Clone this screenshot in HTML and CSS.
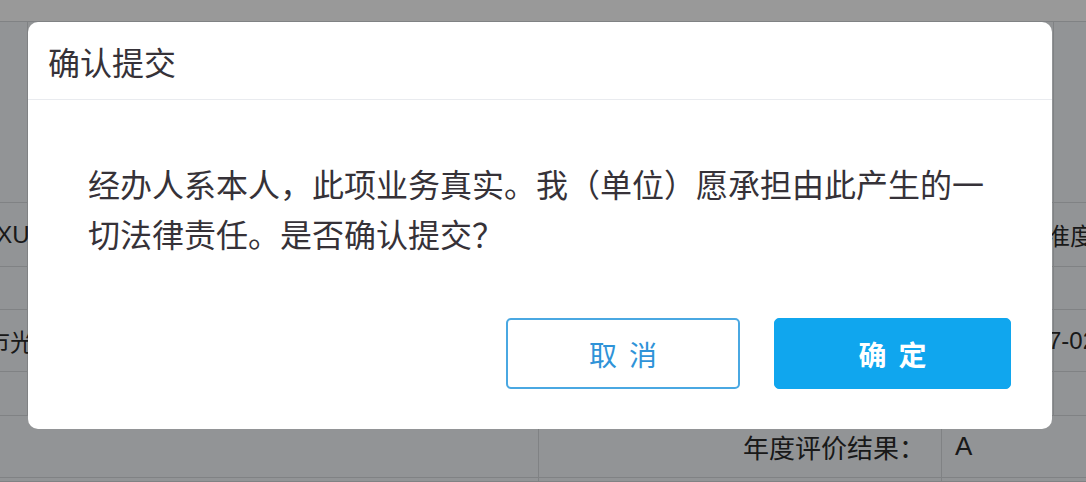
FILE: index.html
```html
<!DOCTYPE html>
<html lang="zh-CN">
<head>
<meta charset="utf-8">
<title>确认提交</title>
<link rel="stylesheet" href="styles.css">
</head>
<body>
  <div class="page">
    <div class="topbar"></div>
    <div class="form">
      <div class="cell c1"></div><div class="cell mid"></div><div class="cell c5"></div>
      <div class="cell c1"><span class="text shift-left">nXUN</span></div><div class="cell mid"></div><div class="cell c5"><span class="text shift-right">准度</span></div>
      <div class="cell c1"></div><div class="cell mid"></div><div class="cell c5"></div>
      <div class="cell c1"><span class="text shift-left2">市光</span></div><div class="cell mid"></div><div class="cell c5"><span class="text shift-right2">7-02</span></div>
      <div class="cell c1"></div><div class="cell mid"></div><div class="cell c5"></div>
      <div class="cell wide"></div><div class="cell label">年度评价结果：</div><div class="cell value">A</div>
      <div class="cell wide"></div><div class="cell label"></div><div class="cell value"></div>
    </div>
  </div>

  <div class="mask">
    <div class="dialog">
      <div class="dialog-header">
        <h2 class="dialog-title">确认提交</h2>
      </div>
      <div class="dialog-body">
        <p>经办人系本人，此项业务真实。我（单位）愿承担由此产生的一切法律责任。是否确认提交？</p>
      </div>
      <div class="dialog-footer">
        <button class="btn btn-cancel">取消</button>
        <button class="btn btn-primary">确定</button>
      </div>
    </div>
  </div>
</body>
</html>
```

FILE: styles.css
```css
* { box-sizing: border-box; }

html, body {
  margin: 0;
  padding: 0;
  width: 1086px;
  height: 482px;
  overflow: hidden;
}

body {
  font-family: "Noto Sans CJK SC", "Liberation Sans", sans-serif;
  background: #f4f7fa;
  color: #333;
}

.page {
  width: 1086px;
  height: 482px;
  overflow: hidden;
}

.topbar {
  height: 22px;
  background: #ffffff;
  border-bottom: 1px solid #d6d9dd;
}

.form {
  display: grid;
  grid-template-columns: 28px 511px 403px 112px 1fr;
  grid-template-rows: 181px 64px 43px 62px 44px 62px 4px;
}

.cell {
  border-right: 1px solid #d6d9dd;
  border-bottom: 1px solid #d6d9dd;
  display: flex;
  align-items: center;
  font-family: "Liberation Sans", "Noto Sans CJK SC", sans-serif;
  font-size: 24px;
  color: #2b2b2b;
  white-space: nowrap;
}

.c1 { grid-column: 1; }
.mid { grid-column: 2 / span 3; }
.c5 { grid-column: 5; border-right: none; }
.wide { grid-column: 1 / span 2; }
.label {
  grid-column: 3;
  justify-content: flex-end;
  padding-right: 16px;
  font-family: "Noto Sans CJK SC", sans-serif;
  font-size: 26px;
}
.value {
  grid-column: 4 / span 2;
  border-right: none;
  padding-left: 13px;
  font-size: 26px;
}

.text { display: inline-block; }
.shift-left { margin-left: -17px; }
.shift-left2 { margin-left: -14px; font-family: "Noto Sans CJK SC", sans-serif; }
.shift-right { margin-left: -8px; font-family: "Noto Sans CJK SC", sans-serif; }
.shift-right2 { margin-left: -6px; }

/* modal */
.mask {
  position: fixed;
  inset: 0;
  background: rgba(0, 0, 0, 0.4);
  padding: 22px 0 0 28px;
}

.dialog {
  width: 1024px;
  height: 407px;
  background: #ffffff;
  border-radius: 10px;
  display: flex;
  flex-direction: column;
}

.dialog-header {
  padding: 19px 20px 18px;
  border-bottom: 1px solid #e9ebef;
}

.dialog-title {
  margin: 0;
  font-size: 32px;
  line-height: 40px;
  font-weight: normal;
  color: #363238;
}

.dialog-body {
  padding: 58px 60px 0;
}

.dialog-body p {
  margin: 0;
  font-size: 32px;
  line-height: 50px;
  color: #363238;
}

.dialog-footer {
  margin-top: auto;
  display: flex;
  justify-content: flex-end;
  gap: 34px;
  padding: 0 41px 40px 0;
}

.btn {
  height: 71px;
  border-radius: 5px;
  font-family: "Noto Sans CJK SC", sans-serif;
  font-size: 28px;
  letter-spacing: 12px;
  text-indent: 12px;
  cursor: pointer;
}

.btn-cancel {
  width: 234px;
  background: #ffffff;
  border: 2px solid #4aa8e2;
  color: #2f93d8;
}

.btn-primary {
  width: 237px;
  background: #10a6ee;
  border: 1px solid #10a6ee;
  color: #ffffff;
  font-weight: bold;
}
```
